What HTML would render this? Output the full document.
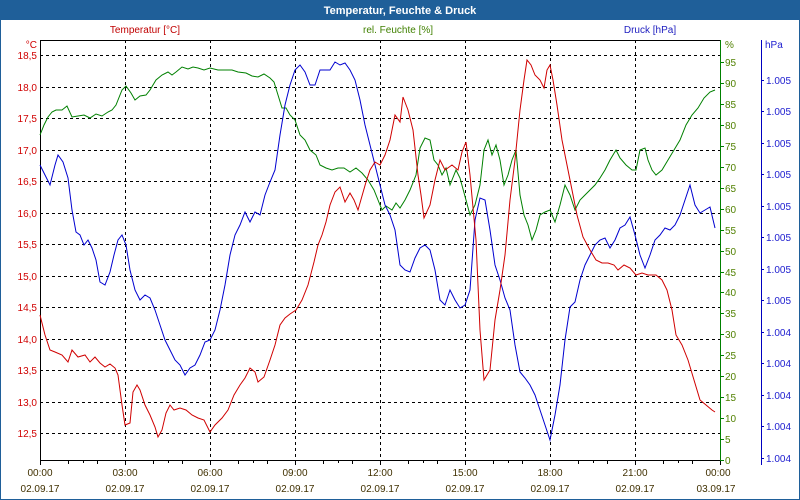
<!DOCTYPE html>
<html><head><meta charset="utf-8"><style>
html,body{margin:0;padding:0;background:#fff;}
svg{display:block;font-family:"Liberation Sans",sans-serif;}
</style></head><body>
<svg width="800" height="500" viewBox="0 0 800 500" xmlns="http://www.w3.org/2000/svg">
<rect x="0" y="0" width="800" height="500" fill="#fff"/>
<rect x="0.5" y="0.5" width="799" height="499" fill="none" stroke="#1f5f99"/>
<rect x="0" y="0" width="800" height="20" fill="#1f5f99"/>
<text x="400" y="14" fill="#fff" font-size="11" font-weight="bold" text-anchor="middle">Temperatur, Feuchte &amp; Druck</text>
<text x="145" y="33" fill="#c00000" font-size="10" text-anchor="middle">Temperatur [°C]</text>
<text x="398" y="33" fill="#408000" font-size="10" text-anchor="middle">rel. Feuchte [%]</text>
<text x="650" y="33" fill="#2020c0" font-size="10" text-anchor="middle">Druck [hPa]</text>
<g stroke="#000" stroke-dasharray="3,3" stroke-width="1">
<line x1="40" x2="720" y1="55.5" y2="55.5"/><line x1="40" x2="720" y1="87.5" y2="87.5"/><line x1="40" x2="720" y1="118.5" y2="118.5"/><line x1="40" x2="720" y1="150.5" y2="150.5"/><line x1="40" x2="720" y1="181.5" y2="181.5"/><line x1="40" x2="720" y1="213.5" y2="213.5"/><line x1="40" x2="720" y1="244.5" y2="244.5"/><line x1="40" x2="720" y1="276.5" y2="276.5"/><line x1="40" x2="720" y1="307.5" y2="307.5"/><line x1="40" x2="720" y1="339.5" y2="339.5"/><line x1="40" x2="720" y1="370.5" y2="370.5"/><line x1="40" x2="720" y1="402.5" y2="402.5"/><line x1="40" x2="720" y1="433.5" y2="433.5"/>
<line x1="125.5" x2="125.5" y1="40" y2="460"/><line x1="210.5" x2="210.5" y1="40" y2="460"/><line x1="295.5" x2="295.5" y1="40" y2="460"/><line x1="380.5" x2="380.5" y1="40" y2="460"/><line x1="465.5" x2="465.5" y1="40" y2="460"/><line x1="550.5" x2="550.5" y1="40" y2="460"/><line x1="635.5" x2="635.5" y1="40" y2="460"/>
</g>
<g stroke="#000" fill="none">
<line x1="40.5" y1="40" x2="40.5" y2="460"/>
<line x1="40" y1="40.5" x2="720" y2="40.5"/>
<line x1="40" y1="460.5" x2="720" y2="460.5"/>
<path d="M40.5 460v5M68.5 460v4M83.5 460v3M97.5 460v4M125.5 460v5M153.5 460v4M168.5 460v3M182.5 460v4M210.5 460v5M238.5 460v4M253.5 460v3M267.5 460v4M295.5 460v5M323.5 460v4M338.5 460v3M352.5 460v4M380.5 460v5M408.5 460v4M423.5 460v3M437.5 460v4M465.5 460v5M493.5 460v4M508.5 460v3M522.5 460v4M550.5 460v5M578.5 460v4M593.5 460v3M607.5 460v4M635.5 460v5M663.5 460v4M678.5 460v3M692.5 460v4M720.5 460v5"/>
</g>
<line x1="720.5" y1="40" x2="720.5" y2="460" stroke="#008000"/>
<path stroke="#008000" d="M720 62.5h4M720 83.5h4M720 104.5h4M720 125.5h4M720 146.5h4M720 167.5h4M720 188.5h4M720 209.5h4M720 230.5h4M720 251.5h4M720 272.5h4M720 292.5h4M720 313.5h4M720 334.5h4M720 355.5h4M720 376.5h4M720 397.5h4M720 418.5h4M720 439.5h4M720 460.5h4"/>
<line x1="761.5" y1="40" x2="761.5" y2="465" stroke="#0000c0"/>
<path stroke="#0000c0" d="M761 80.5h3M761 111.5h3M761 143.5h3M761 174.5h3M761 206.5h3M761 237.5h3M761 269.5h3M761 300.5h3M761 332.5h3M761 363.5h3M761 395.5h3M761 426.5h3M761 458.5h3"/>
<g fill="#d00000" font-size="10" text-anchor="end">
<text x="37" y="48">°C</text>
<text x="37" y="59">18,5</text><text x="37" y="91">18,0</text><text x="37" y="122">17,5</text><text x="37" y="154">17,0</text><text x="37" y="185">16,5</text><text x="37" y="217">16,0</text><text x="37" y="248">15,5</text><text x="37" y="280">15,0</text><text x="37" y="311">14,5</text><text x="37" y="343">14,0</text><text x="37" y="374">13,5</text><text x="37" y="406">13,0</text><text x="37" y="437">12,5</text>
</g>
<g fill="#508000" font-size="10">
<text x="725" y="48">%</text>
<text x="725" y="66">95</text><text x="725" y="87">90</text><text x="725" y="108">85</text><text x="725" y="129">80</text><text x="725" y="150">75</text><text x="725" y="171">70</text><text x="725" y="192">65</text><text x="725" y="213">60</text><text x="725" y="234">55</text><text x="725" y="255">50</text><text x="725" y="276">45</text><text x="725" y="296">40</text><text x="725" y="317">35</text><text x="725" y="338">30</text><text x="725" y="359">25</text><text x="725" y="380">20</text><text x="725" y="401">15</text><text x="725" y="422">10</text><text x="725" y="443">5</text><text x="725" y="464">0</text>
</g>
<g fill="#2020d0" font-size="10">
<text x="765" y="48">hPa</text>
<text x="766" y="84">1.005</text><text x="766" y="115">1.005</text><text x="766" y="147">1.005</text><text x="766" y="178">1.005</text><text x="766" y="210">1.005</text><text x="766" y="241">1.005</text><text x="766" y="273">1.005</text><text x="766" y="304">1.005</text><text x="766" y="336">1.004</text><text x="766" y="367">1.004</text><text x="766" y="399">1.004</text><text x="766" y="430">1.004</text><text x="766" y="462">1.004</text>
</g>
<g fill="#403000" font-size="10" text-anchor="middle">
<text x="40" y="476">00:00</text><text x="125" y="476">03:00</text><text x="210" y="476">06:00</text><text x="295" y="476">09:00</text><text x="380" y="476">12:00</text><text x="465" y="476">15:00</text><text x="550" y="476">18:00</text><text x="635" y="476">21:00</text><text x="718" y="476">00:00</text>
<text x="40" y="492">02.09.17</text><text x="125" y="492">02.09.17</text><text x="210" y="492">02.09.17</text><text x="295" y="492">02.09.17</text><text x="380" y="492">02.09.17</text><text x="465" y="492">02.09.17</text><text x="550" y="492">02.09.17</text><text x="635" y="492">02.09.17</text><text x="716" y="492">03.09.17</text>
</g>
<polyline fill="none" stroke="#008000" stroke-width="1" points="40,135 44,125 48,117 52,112 56,110 62,110 67,106 72,117 78,116 84,115 90,118 96,114 102,116 108,112 112,110 116,105 122,90 126,86 131,93 135,100 140,96 146,95 150,90 156,80 162,75 168,72 172,75 176,72 182,67 188,69 193,67 198,68 204,70 210,68 218,70 225,70 232,70 238,72 246,73 252,76 258,77 264,74 270,78 274,82 278,95 282,108 286,108 290,115 295,120 300,135 305,140 310,150 316,155 320,165 326,168 332,170 338,168 344,168 350,172 356,168 362,173 368,180 374,190 378,200 382,210 386,206 392,210 396,203 400,208 405,200 410,190 416,175 420,148 425,138 430,140 434,160 438,165 442,175 446,168 450,185 456,170 460,178 466,200 470,215 475,205 480,185 484,150 488,140 492,155 496,145 500,160 504,185 508,175 512,160 516,150 520,195 524,215 528,225 532,240 536,230 540,215 545,212 550,210 555,222 560,205 565,185 570,195 575,210 580,200 585,195 590,190 595,185 600,178 605,170 610,160 616,150 620,158 626,165 632,170 636,170 640,150 645,148 648,160 652,170 656,175 662,170 668,160 674,150 680,140 686,125 692,115 698,108 704,98 710,92 715,90"/>
<polyline fill="none" stroke="#0000d0" stroke-width="1" points="40,165 45,175 50,185 55,165 58,155 63,162 68,178 72,210 76,232 80,235 84,245 88,240 92,248 96,260 100,282 105,285 110,272 114,255 118,240 122,235 126,245 130,270 135,290 140,300 145,295 150,298 155,310 160,325 165,340 170,350 175,360 180,365 185,375 190,368 195,365 200,355 205,342 210,340 215,330 220,310 225,285 230,255 235,235 240,225 245,212 250,222 255,212 260,215 265,195 270,182 275,170 280,135 285,105 290,85 295,70 300,65 305,72 310,85 315,85 320,70 325,70 330,70 335,62 340,65 345,63 350,70 355,80 360,100 365,125 370,145 375,165 380,185 385,205 390,215 395,230 400,265 405,270 410,272 415,258 420,248 425,245 430,250 435,270 440,300 445,305 450,290 455,300 460,308 465,305 470,290 475,220 480,198 485,200 490,230 495,265 500,280 505,298 510,310 515,345 520,372 525,378 530,385 535,395 540,410 545,425 550,440 555,415 560,385 565,340 570,307 575,302 580,280 585,265 590,255 595,245 600,240 605,238 610,248 615,240 620,228 625,225 630,217 635,235 640,255 645,268 650,255 655,240 660,235 665,228 670,230 675,225 680,215 685,200 690,185 695,205 700,213 705,210 710,207 715,228"/>
<polyline fill="none" stroke="#d00000" stroke-width="1" points="40,315 45,335 50,350 55,352 62,355 68,362 72,350 78,357 85,355 90,362 95,357 100,363 105,367 110,364 115,368 118,375 122,405 125,425 130,423 133,392 137,385 140,390 145,405 150,415 155,427 158,437 162,430 166,413 170,405 174,410 180,408 186,410 192,415 198,418 204,420 210,432 215,425 222,418 228,410 234,395 240,385 245,378 250,368 255,372 258,382 264,377 270,360 275,345 280,325 285,318 290,314 296,310 302,300 308,285 314,262 318,245 322,235 326,222 330,205 335,192 340,187 345,202 350,193 354,200 358,210 362,196 366,182 370,170 375,162 380,165 385,155 390,140 395,115 400,122 403,97 408,110 413,130 418,175 421,195 424,218 430,205 435,180 440,160 445,170 452,165 458,170 462,152 466,142 470,175 476,240 480,330 484,380 490,370 495,320 500,290 505,255 510,200 515,160 520,110 524,80 527,60 531,65 535,75 540,80 544,88 547,70 550,65 553,80 557,105 562,140 567,165 572,190 577,215 583,237 590,250 596,260 602,263 608,263 614,265 618,270 624,265 630,268 636,275 642,273 648,275 656,275 662,280 667,290 672,310 676,335 682,345 688,360 694,380 700,400 706,405 712,410 715,412"/>
</svg>
</body></html>
